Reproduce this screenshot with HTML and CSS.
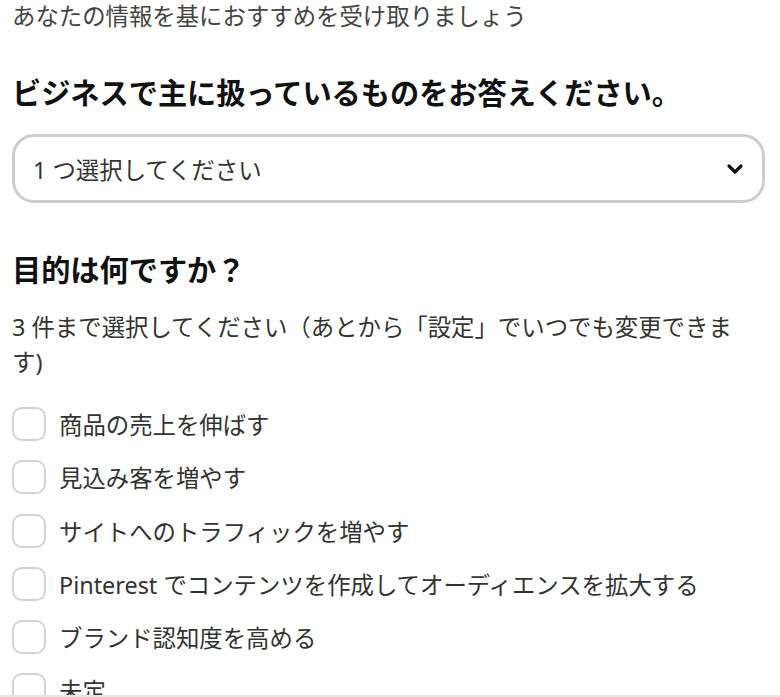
FILE: index.html
```html
<!DOCTYPE html>
<html lang="ja">
<head>
<meta charset="utf-8">
<link rel="stylesheet" href="styles.css">
</head>
<body>
<main class="page">
  <p class="intro">あなたの情報を基におすすめを受け取りましょう</p>
  <h2 class="q q-first">ビジネスで主に扱っているものをお答えください。</h2>
  <div class="select">
    <span class="select-text">1 つ選択してください</span>
    <svg class="chev" width="18" height="18" viewBox="0 0 18 18"><path d="M3 6 L9 12 L15 6" fill="none" stroke="#111" stroke-width="3.2" stroke-linecap="round" stroke-linejoin="round"/></svg>
  </div>
  <h2 class="q q-second">目的は何ですか？</h2>
  <p class="hint">3 件まで選択してください（あとから「設定」でいつでも変更できます)</p>
  <ul class="opts">
    <li class="opt"><span class="box"></span><span>商品の売上を伸ばす</span></li>
    <li class="opt"><span class="box"></span><span>見込み客を増やす</span></li>
    <li class="opt"><span class="box"></span><span>サイトへのトラフィックを増やす</span></li>
    <li class="opt"><span class="box"></span><span>Pinterest でコンテンツを作成してオーディエンスを拡大する</span></li>
    <li class="opt"><span class="box"></span><span>ブランド認知度を高める</span></li>
    <li class="opt"><span class="box"></span><span>未定</span></li>
  </ul>
</main>
<div class="footer-line"></div>
</body>
</html>
```

FILE: styles.css
```css
html, body {
  margin: 0;
  padding: 0;
  background: #fff;
  overflow: hidden;
  height: 697px;
}
body {
  font-family: "Noto Sans", "Noto Sans CJK JP", sans-serif;
  color: #333;
  position: relative;
}
.page {
  padding: 0 15px 0 12px;
}
.intro {
  margin: 0;
  font-size: 23.4px;
  line-height: 32px;
  color: #444;
}
.q {
  margin: 0;
  font-size: 29.2px;
  line-height: 36px;
  font-weight: 700;
  color: #111;
}
.q-first { margin-top: 43px; }
.select {
  margin-top: 23px;
  height: 69px;
  box-sizing: border-box;
  border: 3px solid #cdcdcd;
  border-radius: 22px;
  display: flex;
  align-items: center;
  justify-content: space-between;
  padding: 0 18px 0 18px;
}
.select-text {
  font-size: 23.4px;
  color: #333;
}
.q-second { margin-top: 49px; }
.hint {
  margin: 22px 0 0;
  padding-right: 12px;
  font-size: 23.4px;
  line-height: 35px;
  color: #333;
}
.opts {
  list-style: none;
  margin: 27px 0 0;
  padding: 0;
  display: flex;
  flex-direction: column;
  gap: 19.3px;
}
.opt {
  display: flex;
  align-items: center;
  gap: 13px;
  font-size: 23.4px;
  height: 34px;
  color: #333;
}
.box {
  width: 34px;
  height: 34px;
  box-sizing: border-box;
  border: 2px solid #d3d3d3;
  border-radius: 10px;
  flex: none;
}
.footer-line {
  position: absolute;
  left: 0;
  right: 0;
  top: 695px;
  height: 2px;
  background: #e6e6e6;
}
```
